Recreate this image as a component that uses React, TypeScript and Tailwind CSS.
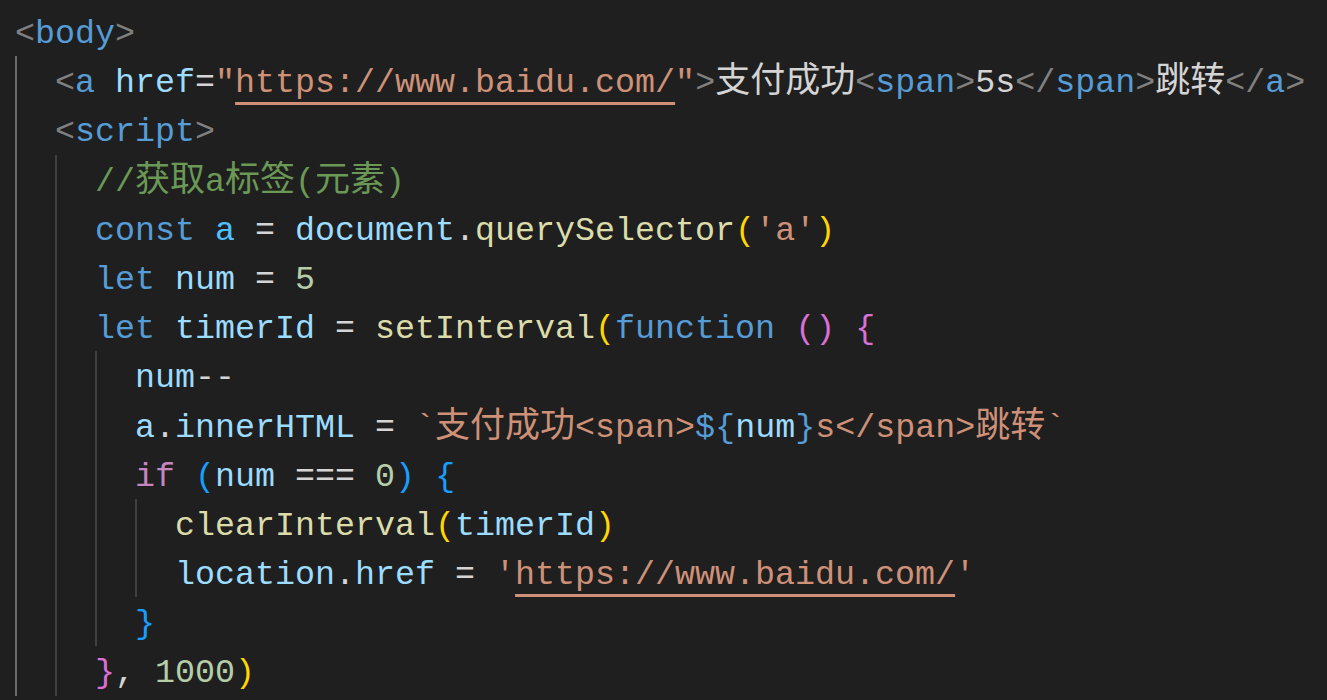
import React from 'react';

type Tok = [string, string, boolean?];

// token colours (VS Code Dark+)
const C: Record<string, string> = {
  p: 'text-[#808080]',
  tag: 'text-[#569cd6]',
  attr: 'text-[#9cdcfe]',
  str: 'text-[#ce9178]',
  d: 'text-[#d4d4d4]',
  com: 'text-[#6a9955]',
  kw: 'text-[#569cd6]',
  v: 'text-[#9cdcfe]',
  cv: 'text-[#4fc1ff]',
  fn: 'text-[#dcdcaa]',
  num: 'text-[#b5cea8]',
  ctl: 'text-[#c586c0]',
  b1: 'text-[#ffd700]',
  b2: 'text-[#da70d6]',
  b3: 'text-[#179fff]',
};

const URL = 'https://www.baidu.com/';

const lines: { indent: number; toks: Tok[] }[] = [
  { indent: 0, toks: [['<', 'p'], ['body', 'tag'], ['>', 'p']] },
  {
    indent: 1,
    toks: [
      ['<', 'p'], ['a', 'tag'], [' ', 'd'], ['href', 'attr'], ['=', 'd'], ['"', 'str'], [URL, 'str', true], ['"', 'str'],
      ['>', 'p'], ['支付成功', 'd'], ['<', 'p'], ['span', 'tag'], ['>', 'p'], ['5s', 'd'], ['</', 'p'], ['span', 'tag'],
      ['>', 'p'], ['跳转', 'd'], ['</', 'p'], ['a', 'tag'], ['>', 'p'],
    ],
  },
  { indent: 1, toks: [['<', 'p'], ['script', 'tag'], ['>', 'p']] },
  { indent: 2, toks: [['//获取a标签(元素)', 'com']] },
  {
    indent: 2,
    toks: [
      ['const', 'kw'], [' ', 'd'], ['a', 'cv'], [' = ', 'd'], ['document', 'v'], ['.', 'd'], ['querySelector', 'fn'],
      ['(', 'b1'], ["'a'", 'str'], [')', 'b1'],
    ],
  },
  { indent: 2, toks: [['let', 'kw'], [' ', 'd'], ['num', 'v'], [' = ', 'd'], ['5', 'num']] },
  {
    indent: 2,
    toks: [
      ['let', 'kw'], [' ', 'd'], ['timerId', 'v'], [' = ', 'd'], ['setInterval', 'fn'], ['(', 'b1'], ['function', 'kw'],
      [' ', 'd'], ['(', 'b2'], [')', 'b2'], [' ', 'd'], ['{', 'b2'],
    ],
  },
  { indent: 3, toks: [['num', 'v'], ['--', 'd']] },
  {
    indent: 3,
    toks: [
      ['a', 'v'], ['.', 'd'], ['innerHTML', 'v'], [' = ', 'd'], ['`支付成功<span>', 'str'], ['${', 'kw'], ['num', 'v'],
      ['}', 'kw'], ['s</span>跳转`', 'str'],
    ],
  },
  {
    indent: 3,
    toks: [
      ['if', 'ctl'], [' ', 'd'], ['(', 'b3'], ['num', 'v'], [' === ', 'd'], ['0', 'num'], [')', 'b3'], [' ', 'd'], ['{', 'b3'],
    ],
  },
  { indent: 4, toks: [['clearInterval', 'fn'], ['(', 'b1'], ['timerId', 'v'], [')', 'b1']] },
  {
    indent: 4,
    toks: [['location', 'v'], ['.', 'd'], ['href', 'v'], [' = ', 'd'], ["'", 'str'], [URL, 'str', true], ["'", 'str']],
  },
  { indent: 3, toks: [['}', 'b3']] },
  { indent: 2, toks: [['}', 'b2'], [', ', 'd'], ['1000', 'num'], [')', 'b1']] },
];

// split a string into CJK / non-CJK runs so the wide glyphs get their own font
function runs(text: string) {
  return text.split(/([\u4e00-\u9fff]+)/).filter(Boolean);
}

function Token({ tok }: { tok: Tok }) {
  const [text, kind, link] = tok;
  return (
    <span
      className={`${C[kind]} ${link ? 'underline decoration-[#ce9178] decoration-[3px] underline-offset-[10px]' : ''}`}
    >
      {runs(text).map((r, i) =>
        /[\u4e00-\u9fff]/.test(r) ? (
          <span key={i} className="font-['Noto_Sans_CJK_SC',sans-serif] text-[35px] leading-[0px]">
            {r}
          </span>
        ) : (
          <React.Fragment key={i}>{r}</React.Fragment>
        )
      )}
    </span>
  );
}

export default function App() {
  return (
    <div className="h-[700px] w-full overflow-hidden bg-[#1f1f1f] pl-[15px] pt-[7px] font-['Liberation_Mono',monospace] text-[33.33px]">
      {lines.map((line, li) => (
        <div key={li} className="flex h-[49.2px]">
          {Array.from({ length: line.indent }).map((_, gi) => (
            <div
              key={gi}
              className={`w-[40px] shrink-0 border-l-2 ${gi === 0 ? 'border-[#6b6b6b]' : 'border-[#404040]'}`}
            />
          ))}
          <div className="whitespace-pre pt-[5px] leading-[44.2px]">
            {line.toks.map((t, ti) => (
              <Token key={ti} tok={t} />
            ))}
          </div>
        </div>
      ))}
    </div>
  );
}
